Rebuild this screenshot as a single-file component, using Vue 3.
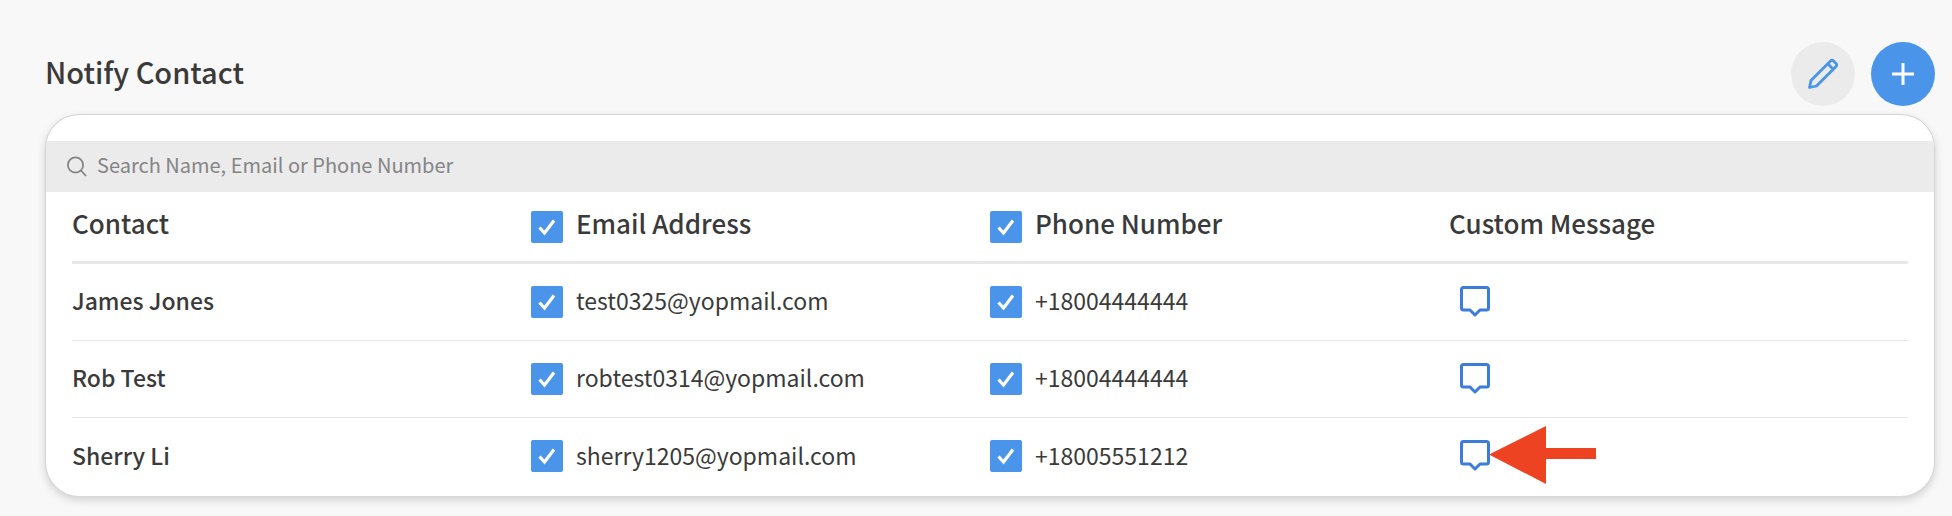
<script setup>
const contacts = [
  { name: 'James Jones', email: 'test0325@yopmail.com', phone: '+18004444444' },
  { name: 'Rob Test', email: 'robtest0314@yopmail.com', phone: '+18004444444' },
  { name: 'Sherry Li', email: 'sherry1205@yopmail.com', phone: '+18005551212', arrow: true }
]
</script>

<template>
  <div class="page">
    <div class="top">
      <h2 class="title">Notify Contact</h2>
      <div class="actions">
        <button class="round edit" aria-label="Edit">
          <svg width="32" height="32" viewBox="0 0 32 32" fill="none" stroke="#4a95ea" stroke-width="2.8" stroke-linejoin="round">
            <path d="M2.5 29.5 L4 22.5 L23.5 3 Q25 1.5 26.5 3 L29 5.5 Q30.5 7 29 8.5 L9.5 28 Z" />
            <path d="M21 6 L26 11" />
          </svg>
        </button>
        <button class="round add" aria-label="Add">
          <svg width="22" height="22" viewBox="0 0 22 22" stroke="#fff" stroke-width="3"><path d="M11 0V22M0 11H22" /></svg>
        </button>
      </div>
    </div>
    <div class="card">
      <div class="search">
        <svg width="21" height="21" viewBox="0 0 21 21" fill="none" stroke="#858585" stroke-width="1.8"><circle cx="9.5" cy="9" r="7.6" /><path d="M15 14.5L20 20" /></svg>
        <span class="txt">Search Name, Email or Phone Number</span>
      </div>
      <div class="table">
        <div class="row head">
          <div class="txt">Contact</div>
          <div class="cell"><span class="check"><svg width="18" height="18" viewBox="0 0 18 18" fill="none" stroke="#fff" stroke-width="3.2"><path d="M1.5 9.5L6.5 15L16 2.5" /></svg></span><span class="txt">Email Address</span></div>
          <div class="cell"><span class="check"><svg width="18" height="18" viewBox="0 0 18 18" fill="none" stroke="#fff" stroke-width="3.2"><path d="M1.5 9.5L6.5 15L16 2.5" /></svg></span><span class="txt">Phone Number</span></div>
          <div class="txt">Custom Message</div>
        </div>
        <div v-for="c in contacts" :key="c.name" class="row body">
          <div class="name txt">{{ c.name }}</div>
          <div class="cell"><span class="check"><svg width="18" height="18" viewBox="0 0 18 18" fill="none" stroke="#fff" stroke-width="3.2"><path d="M1.5 9.5L6.5 15L16 2.5" /></svg></span><span class="txt">{{ c.email }}</span></div>
          <div class="cell"><span class="check"><svg width="18" height="18" viewBox="0 0 18 18" fill="none" stroke="#fff" stroke-width="3.2"><path d="M1.5 9.5L6.5 15L16 2.5" /></svg></span><span class="txt">{{ c.phone }}</span></div>
          <div class="msg">
            <svg width="30" height="31" viewBox="0 0 30 31" fill="none" stroke="#3b7dd8" stroke-width="3" stroke-linejoin="round">
              <path d="M3.5 1.5H26.5Q28.5 1.5 28.5 3.5V22Q28.5 24 26.5 24H20L15 29L10 24H3.5Q1.5 24 1.5 22V3.5Q1.5 1.5 3.5 1.5Z" />
            </svg>
            <svg v-if="c.arrow" class="arrow" width="108" height="58" viewBox="0 0 108 58"><path d="M0 28.5L57 0V22H107V33H57V58Z" fill="#ee4323" /></svg>
          </div>
        </div>
      </div>
    </div>
  </div>
</template>

<style>
html, body { margin: 0; background: #f8f8f8; }
</style>

<style scoped>
.page {
  width: 1952px;
  height: 516px;
  box-sizing: border-box;
  padding: 42px 17px 0 45px;
  font-family: "Noto Sans CJK JP", "Noto Sans", sans-serif;
  color: #3a3a3a;
  overflow: hidden;
}
.top { display: flex; justify-content: space-between; height: 72px; }
.title { margin: 0; font-size: 29px; font-weight: 500; line-height: 58px; height: 64px; letter-spacing: 0; }
.actions { display: flex; gap: 16px; }
.round { width: 64px; height: 64px; border: 0; padding: 0; border-radius: 50%; display: flex; align-items: center; justify-content: center; }
.edit { background: #ebebeb; }
.add { background: #4a95ea; }
.card {
  width: 1890px;
  box-sizing: border-box;
  height: 382px;
  background: #fff;
  border: 1px solid #d4d4d4;
  border-bottom: 0;
  border-radius: 34px;
  padding-top: 26px;
  box-shadow: 0 4px 8px rgba(0, 0, 0, 0.16);
  overflow: hidden;
}
.search {
  height: 51px;
  background: #ebebeb;
  display: flex;
  align-items: center;
  gap: 10px;
  padding-left: 20px;
  font-size: 20px;
  color: #858585;
}
.table { padding: 0 26px; }
.row { display: grid; grid-template-columns: 459px 459px 459px 1fr; align-items: center; }
.head { height: 69px; border-bottom: 3px solid #e8e8e8; font-size: 26px; font-weight: 500; }
.body { height: 76px; border-bottom: 1px solid #e8e8e8; font-size: 23px; }
.body:last-child { border-bottom: 0; }
.name { font-weight: 500; }
.txt { padding-bottom: 5px; }
.head .txt { padding-bottom: 8px; }
.body:last-child .txt { padding-bottom: 3px; }
.cell { display: flex; align-items: center; gap: 13px; }
.check { width: 32px; height: 32px; border-radius: 2px; background: #4a95ea; display: flex; align-items: center; justify-content: center; flex: none; }
.msg { position: relative; padding: 0 0 2px 11px; display: flex; align-items: center; }
.arrow { position: absolute; left: 40px; top: -14px; }
</style>
